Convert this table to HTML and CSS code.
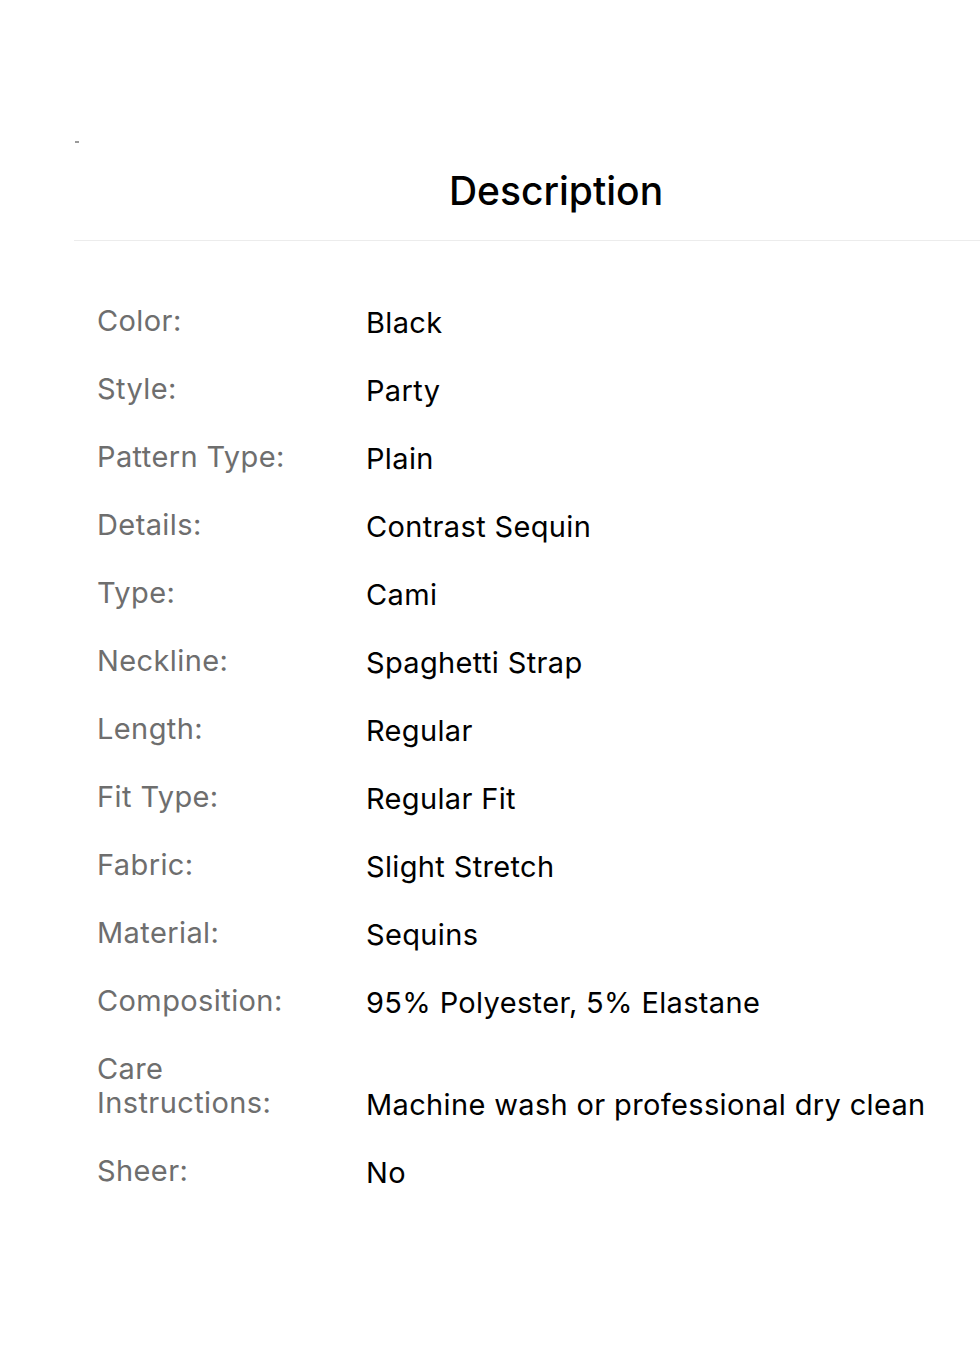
FILE: index.html
```html
<!DOCTYPE html>
<html lang="en">
<head>
<meta charset="utf-8">
<title>Description</title>
<link rel="stylesheet" href="styles.css">
</head>
<body>
<div class="sheet">
  <div class="mark"></div>
  <h1 class="title">Description</h1>
  <dl class="specs">
    <div class="row"><dt class="label">Color:</dt><dd class="value">Black</dd></div>
    <div class="row"><dt class="label">Style:</dt><dd class="value">Party</dd></div>
    <div class="row"><dt class="label">Pattern Type:</dt><dd class="value">Plain</dd></div>
    <div class="row"><dt class="label">Details:</dt><dd class="value">Contrast Sequin</dd></div>
    <div class="row"><dt class="label">Type:</dt><dd class="value">Cami</dd></div>
    <div class="row"><dt class="label">Neckline:</dt><dd class="value">Spaghetti Strap</dd></div>
    <div class="row"><dt class="label">Length:</dt><dd class="value">Regular</dd></div>
    <div class="row"><dt class="label">Fit Type:</dt><dd class="value">Regular Fit</dd></div>
    <div class="row"><dt class="label">Fabric:</dt><dd class="value">Slight Stretch</dd></div>
    <div class="row"><dt class="label">Material:</dt><dd class="value">Sequins</dd></div>
    <div class="row"><dt class="label">Composition:</dt><dd class="value">95% Polyester, 5% Elastane</dd></div>
    <div class="row"><dt class="label">Care<br>Instructions:</dt><dd class="value">Machine wash or professional dry clean</dd></div>
    <div class="row"><dt class="label">Sheer:</dt><dd class="value">No</dd></div>
  </dl>
</div>
</body>
</html>
```
FILE: styles.css
```css
html, body {
  margin: 0;
  padding: 0;
  background: #ffffff;
}
body {
  width: 980px;
  min-height: 1359px;
  font-family: Inter, "Noto Sans", "Liberation Sans", sans-serif;
}
.sheet {
  margin-left: 74px;
  padding-top: 141px;
}
.mark {
  width: 4px;
  height: 2px;
  margin-left: 1px;
  background: #9a9a9a;
}
.title {
  margin: 0;
  height: 97px;
  line-height: 95px;
  padding-left: 58px;
  text-align: center;
  font-size: 39px;
  font-weight: 500;
  color: #000;
  border-bottom: 1px solid #ececec;
}
.specs {
  margin: 0;
  padding: 63px 0 0 23px;
  display: flex;
  flex-direction: column;
  gap: 34px;
}
.row {
  display: flex;
  align-items: flex-end;
}
.label {
  width: 269px;
  flex: none;
  font-size: 29px;
  line-height: 34px;
  letter-spacing: 0.4px;
  color: #6e6e6e;
}
.value {
  margin: 0;
  font-size: 29px;
  line-height: 34px;
  letter-spacing: 0.35px;
  color: #000;
  position: relative;
  top: 2px;
}
```
